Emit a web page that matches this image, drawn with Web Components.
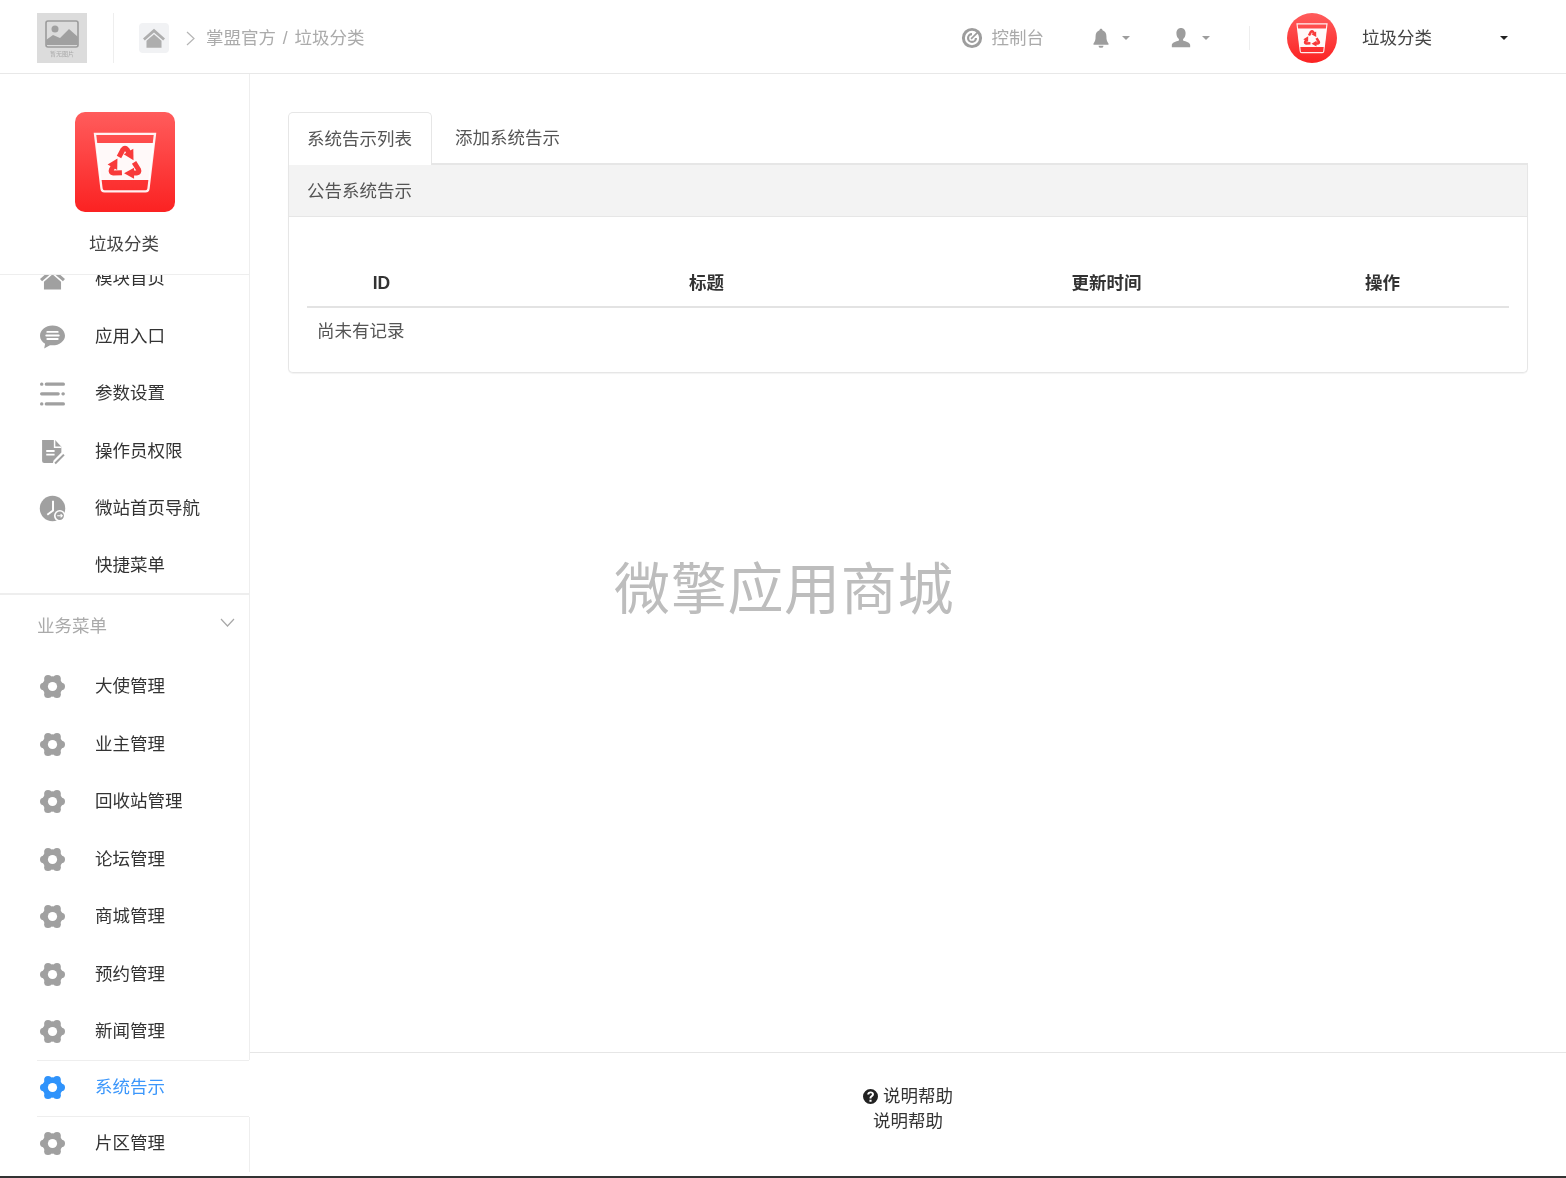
<!DOCTYPE html>
<html lang="zh"><head><meta charset="utf-8"><title>系统告示</title>
<style>
html,body{margin:0;padding:0;background:#333;}
body{font:17.5px/25px "Liberation Sans","Noto Sans CJK SC",sans-serif;color:#333;height:1178px;overflow:hidden;}
</style></head><body>
<app-shell></app-shell>
<script>
const ICONS={
home:'<path d="M12 2 0 12.500l2 2.200L12 6l10 8.700 2-2.200z"/><path d="M12 8 3.800 15V22.500h16.400V15z"/>',
comment:'<path d="M12 1.500C5.400 1.500 0 5.900 0 11.200c0 3.200 1.900 6 4.900 7.800L4 23.500l5.600-3.200c.8.100 1.600.2 2.400.2 6.600 0 12-4.300 12-9.300S18.600 1.500 12 1.500z"/><path d="M7 7.600h10M6 11h12M7 14.400h10" stroke="#fff" stroke-width="1.800" stroke-linecap="round"/>',
list:'<g fill="none" stroke="currentColor" stroke-width="3" stroke-linecap="round"><path d="M1.500 3h.3M6 3h16.500M1.500 12.300h16M22 12.300h.4M1.500 22h.3M6 22h16.500"/></g>',
doc:'<path d="M2 1h12.500l6 6.500V13L13 20.700 12.400 23H4a2 2 0 0 1-2-2z"/><path d="M14 1v7h6.500" fill="none" stroke="#fff" stroke-width="1.400"/><path d="M6 11.500h8M6 15h8" stroke="#fff" stroke-width="1.800"/><path d="M14.500 23.500 23 15" stroke="currentColor" stroke-width="2"/>',
clock:'<circle cx="12" cy="12" r="12.200"/><path d="M12.500 4.500V14L7 18" fill="none" stroke="#fff" stroke-width="1.900"/><circle cx="19" cy="19" r="5.600" fill="#fff"/><circle cx="19" cy="19" r="4" /><path d="M16.500 19h5M19.800 17.400l1.600 1.600-1.600 1.600" fill="none" stroke="#fff" stroke-width="1"/>',
gear:'<g><circle cx="12" cy="12" r="9.800"/><circle cx="20.500" cy="12" r="3.500"/><circle cx="3.500" cy="12" r="3.500"/><circle cx="16.300" cy="4.600" r="3.700"/><circle cx="7.700" cy="4.600" r="3.700"/><circle cx="16.300" cy="19.400" r="3.700"/><circle cx="7.700" cy="19.400" r="3.700"/></g><circle cx="12" cy="12" r="4.400" fill="#fff"/>',
target:'<path fill-rule="evenodd" d="M12 1a11 11 0 1 0 0 22 11 11 0 0 0 0-22zm0 3.200a7.800 7.800 0 1 1 0 15.600 7.800 7.800 0 0 1 0-15.600z"/><path d="M12 6.500a5.500 5.500 0 1 0 5.500 5.500h-2.400A3.100 3.100 0 1 1 12 8.900z"/><path d="M11 13 18.500 5.500" stroke="currentColor" stroke-width="1.800"/>',
bell:'<path d="M12 1c-1.100 0-1.800.7-1.800 1.800C7 3.800 5.500 6.500 5.500 10c0 4.500-.6 6.500-2.500 8.500V20h18v-1.500c-1.900-2-2.500-4-2.500-8.500 0-3.500-1.500-6.200-4.700-7.200C13.800 1.700 13.100 1 12 1z"/><path d="M9 21.200a3 2.600 0 0 0 6 0z"/>',
user:'<path d="M12 0C8.500 0 6.500 2.700 6.500 6.200c0 3 1.100 5.500 3 7v1.900C6 16.500 1 17.500 1 20.500V23h22v-2.500c0-3-5-4-8.500-5.400v-1.900c1.900-1.500 3-4 3-7C17.500 2.700 15.500 0 12 0z"/>',
help:'<path fill-rule="evenodd" d="M12 0a12 12 0 1 0 0 24 12 12 0 0 0 0-24zm-2.200 8.700H6.700C6.900 5.500 9 4 12.200 4c3 0 5.300 1.700 5.300 4.400 0 1.900-1 2.900-2.300 3.800-1.300.9-1.700 1.300-1.700 2.500v.5h-3v-.9c0-1.900.7-2.800 2-3.700 1.100-.8 1.800-1.200 1.800-2.200 0-.9-.8-1.500-1.900-1.500-1.300 0-2.200.7-2.400 1.800zM10.300 17h3.400v3.200h-3.400z"/>',
chev:'<path d="M1 1 7.500 8 14 1" fill="none" stroke="currentColor" stroke-width="1.200"/>'
};
class XIcon extends HTMLElement{connectedCallback(){
 const n=this.getAttribute('name'),s=this.getAttribute('size')||25,vb=n==='chev'?'0 0 15 9':'0 0 24 24';
 const h=n==='chev'?9:s;
 this.attachShadow({mode:'open'}).innerHTML=`<style>:host{display:inline-flex;flex:none;color:inherit}svg{display:block;fill:currentColor;overflow:visible}</style><svg width="${s}" height="${h}" viewBox="${vb}">${ICONS[n]}</svg>`;
}}
customElements.define('x-icon',XIcon);

class BinLogo extends HTMLElement{connectedCallback(){
 const s=this.getAttribute('size')||100,round=this.hasAttribute('round');
 const id='g'+Math.random().toString(36).slice(2);
 const arrow='<path d="M44 45 48 37.500Q50 35 52 37.500L54 41" fill="none" stroke="#f83a3a" stroke-width="5"/><path d="M58.300 36.750 48.700 42.250 58.500 48.200z" fill="#f83a3a"/>';
 this.attachShadow({mode:'open'}).innerHTML=`<style>:host{display:block;width:${s}px;height:${s}px;flex:none}svg{display:block}</style>
 <svg width="${s}" height="${s}" viewBox="0 0 100 100"><defs><linearGradient id="${id}" x1="0" y1="0" x2="0" y2="1"><stop offset="0" stop-color="#ff5c5c"/><stop offset="1" stop-color="#fb2222"/></linearGradient></defs>
 <rect width="100" height="100" rx="${round?50:10}" fill="url(#${id})"/>
 <path d="M21 31H79L74.800 68H25.200z" fill="#fff" fill-opacity=".97"/>
 <path d="M20 21.800H80L73.500 76.500a3 3 0 0 1-3 2.800H29.500a3 3 0 0 1-3-2.800z" fill="none" stroke="#fff" stroke-opacity=".92" stroke-width="2.300"/>
 <g>${arrow}<g transform="rotate(120 50 52)">${arrow}</g><g transform="rotate(240 50 52)">${arrow}</g></g>
 </svg>`;
}}
customElements.define('bin-logo',BinLogo);

class AppHeader extends HTMLElement{connectedCallback(){
 this.attachShadow({mode:'open'}).innerHTML=`<style>
 :host{display:flex;align-items:center;height:74px;box-sizing:border-box;border-bottom:1.25px solid #e8e8e8;background:#fff;padding-left:37px;padding-top:3px;color:#aaa}
 .ph{width:50px;height:50px;background:#dcdcdc;display:flex;flex-direction:column;align-items:center;padding-top:7px;box-sizing:border-box;flex:none}
 .ph svg{display:block}.ph span{font-size:6px;line-height:7px;color:#a9a9a9;margin-top:3px}
 .v{width:1px;height:50px;background:#eee;margin:0 25px 0 26px;flex:none}
 .homeb{width:30px;height:30px;background:#f1f2f4;border-radius:4px;display:flex;align-items:center;justify-content:center;color:#aeaeae;flex:none}
 .sep{margin:0 11px 0 17px;display:flex}
 .crumb{color:#ababab;white-space:nowrap;word-spacing:2px}
 .sp{flex:1}
 .it{display:flex;align-items:center;color:#9d9d9d}
 .car{width:0;height:0;border:4.500px solid transparent;border-top-color:#9d9d9d;border-bottom:0;margin-left:11px}
 .v2{width:1px;height:24px;background:#eee;margin:0 37px 0 39px}
 .name{color:#444;margin-left:25px;width:138px}
 .car2{width:0;height:0;border:4.500px solid transparent;border-top-color:#222;border-bottom:0;margin-right:58px}
 </style>
 <div class="ph"><svg width="36" height="28" viewBox="0 0 36 28"><rect x="1" y="1" width="32" height="26" rx="2" transform="translate(1 0)" fill="none" stroke="#9c9c9c" stroke-width="1.600"/><circle cx="11" cy="9" r="3.500" fill="#a0a0a0"/><path d="M2 25V20L9 15 16 18 25 9 34 17V25z" fill="#a0a0a0"/></svg><span>暂无图片</span></div>
 <div class="v"></div>
 <div class="homeb"><x-icon name="home" size="22"></x-icon></div>
 <span class="sep"><svg width="9" height="15" viewBox="0 0 9 15"><path d="M1 1l7 6.500L1 14" fill="none" stroke="#b5b5b5" stroke-width="1.200"/></svg></span>
 <span class="crumb">掌盟官方 / 垃圾分类</span>
 <div class="sp"></div>
 <div class="it"><x-icon name="target" size="22"></x-icon><span style="margin-left:9px;color:#aaa">控制台</span></div>
 <div class="it" style="margin-left:47px"><x-icon name="bell" size="20"></x-icon><i class="car"></i></div>
 <div class="it" style="margin-left:41px"><x-icon name="user" size="20"></x-icon><i class="car"></i></div>
 <div class="v2"></div>
 <bin-logo size="50" round></bin-logo>
 <span class="name">垃圾分类</span>
 <i class="car2"></i>`;
}}
customElements.define('app-header',AppHeader);

class MenuItem extends HTMLElement{connectedCallback(){
 const ic=this.getAttribute('icon');
 this.attachShadow({mode:'open'}).innerHTML=`<style>
 :host{display:block;height:var(--h,57.5px);box-sizing:border-box;border-right:1.25px solid #eee;color:#333}
 :host([active]){border-right-color:#fff;color:#3c97fb;--ic:#2f93fb}
 .r{height:100%;margin-left:37px;padding-left:3px;display:flex;align-items:center;box-sizing:border-box}
 :host([active]) .r{border-top:1.25px solid #eee;border-bottom:1.25px solid #eee;padding-bottom:1.5px}
 .i{width:25px;height:25px;margin-right:30px;color:var(--ic,#a0a0a0);display:flex}
 </style><div class="r"><span class="i">${ic?`<x-icon name="${ic}" size="25"></x-icon>`:''}</span><slot></slot></div>`;
}}
customElements.define('menu-item',MenuItem);

class AppSidebar extends HTMLElement{connectedCallback(){
 this.attachShadow({mode:'open'}).innerHTML=`<style>
 :host{display:flex;flex-direction:column;width:250px;flex:none;background:#fff;height:1098px;overflow:hidden}
 .brand{height:201px;box-sizing:border-box;border-bottom:1.25px solid #eee;border-right:1.25px solid #eee;padding-top:38px;display:flex;flex-direction:column;align-items:center;flex:none}
 .brand span{margin-top:20px;color:#444;margin-right:1px}
 .menu{flex:1;overflow:hidden}
 .inner{margin-top:-25.250px}
 .sec{height:62px;box-sizing:border-box;border-top:2px solid #eee;border-right:1.25px solid #eee;padding:19.500px 14px 0 37px;display:flex;justify-content:space-between;color:#aaa}
 .sec x-icon{color:#a8a8a8;margin-top:4px}
 </style>
 <div class="brand"><bin-logo size="100"></bin-logo><span>垃圾分类</span></div>
 <div class="menu"><div class="inner">
 <menu-item icon="home">模块首页</menu-item>
 <menu-item icon="comment">应用入口</menu-item>
 <menu-item icon="list">参数设置</menu-item>
 <menu-item icon="doc">操作员权限</menu-item>
 <menu-item icon="clock">微站首页导航</menu-item>
 <menu-item style="--h:55.500px">快捷菜单</menu-item>
 <div class="sec"><span>业务菜单</span><x-icon name="chev" size="15"></x-icon></div>
 <menu-item icon="gear" style="--h:60.500px;padding-top:3px">大使管理</menu-item>
 <menu-item icon="gear">业主管理</menu-item>
 <menu-item icon="gear">回收站管理</menu-item>
 <menu-item icon="gear">论坛管理</menu-item>
 <menu-item icon="gear">商城管理</menu-item>
 <menu-item icon="gear">预约管理</menu-item>
 <menu-item icon="gear">新闻管理</menu-item>
 <menu-item icon="gear" active style="--h:56.500px">系统告示</menu-item>
 <menu-item icon="gear" style="--h:56px;padding-bottom:2px">片区管理</menu-item>
 </div></div>`;
}}
customElements.define('app-sidebar',AppSidebar);

class TabBar extends HTMLElement{connectedCallback(){
 this.attachShadow({mode:'open'}).innerHTML=`<style>
 :host{display:flex;height:53px;box-sizing:border-box;border-bottom:2px solid #e6e6e6;color:#555}
 div{padding:0 19px;height:53px;line-height:52px;box-sizing:border-box}
 .a{border:1.25px solid #e6e6e6;border-bottom:0;border-radius:5px 5px 0 0;background:#fff;padding:0 18px;width:144px;white-space:nowrap}
 .b{padding-left:23px}
 </style><div class="a">系统告示列表</div><div class="b">添加系统告示</div>`;
}}
customElements.define('tab-bar',TabBar);

class DataPanel extends HTMLElement{connectedCallback(){
 this.attachShadow({mode:'open'}).innerHTML=`<style>
 :host{display:block;border:1.25px solid #e6e6e6;border-top:0;border-radius:0 0 5px 5px;box-shadow:0 1px 1px rgba(0,0,0,.05);height:208px;box-sizing:border-box;background:#fff}
 .h{height:52px;line-height:52px;background:#f3f3f3;border-bottom:1.25px solid #e6e6e6;padding-left:18px;color:#555;box-sizing:border-box}
 .b{padding:43px 18.500px 0 17.500px}
 .g{display:grid;grid-template-columns:150px 500px 300px 1fr;height:47.500px;border-bottom:2.500px solid #e3e3e3;box-sizing:border-box;align-items:center;text-align:center;font-weight:700;color:#333;padding-top:2px}
 .e{padding:0 10.500px;line-height:47px;color:#555}
 </style><div class="h">公告系统告示</div><div class="b"><div class="g"><span>ID</span><span>标题</span><span>更新时间</span><span>操作</span></div><div class="e">尚未有记录</div></div>`;
}}
customElements.define('data-panel',DataPanel);

class AppFooter extends HTMLElement{connectedCallback(){
 this.attachShadow({mode:'open'}).innerHTML=`<style>
 :host{display:block;height:124px;box-sizing:border-box;border-top:1.25px solid #e6e6e6;text-align:center;padding-top:31px;color:#333;flex:none;background:#fff}
 x-icon{vertical-align:-2px;margin-right:5px;color:#222}
 </style><div><x-icon name="help" size="15"></x-icon>说明帮助</div><div>说明帮助</div>`;
}}
customElements.define('app-footer',AppFooter);

class AppShell extends HTMLElement{connectedCallback(){
 this.attachShadow({mode:'open'}).innerHTML=`<style>
 :host{display:block;height:1176px;background:#fff;filter:blur(.4px)}
 .body{display:flex;height:1102px}
 main{flex:1;display:flex;flex-direction:column;position:relative;min-width:0}
 .c{flex:1;padding:38px 38px 0}
 .wm{position:absolute;left:364px;top:481px;font-size:56px;line-height:70px;letter-spacing:.7px;color:#bdbdbd;white-space:nowrap;font-weight:400}
 </style>
 <app-header></app-header>
 <div class="body"><app-sidebar></app-sidebar>
 <main><div class="c"><tab-bar></tab-bar><data-panel></data-panel></div>
 <div class="wm">微擎应用商城</div><app-footer></app-footer></main></div>`;
}}
customElements.define('app-shell',AppShell);
</script>
</body></html>
